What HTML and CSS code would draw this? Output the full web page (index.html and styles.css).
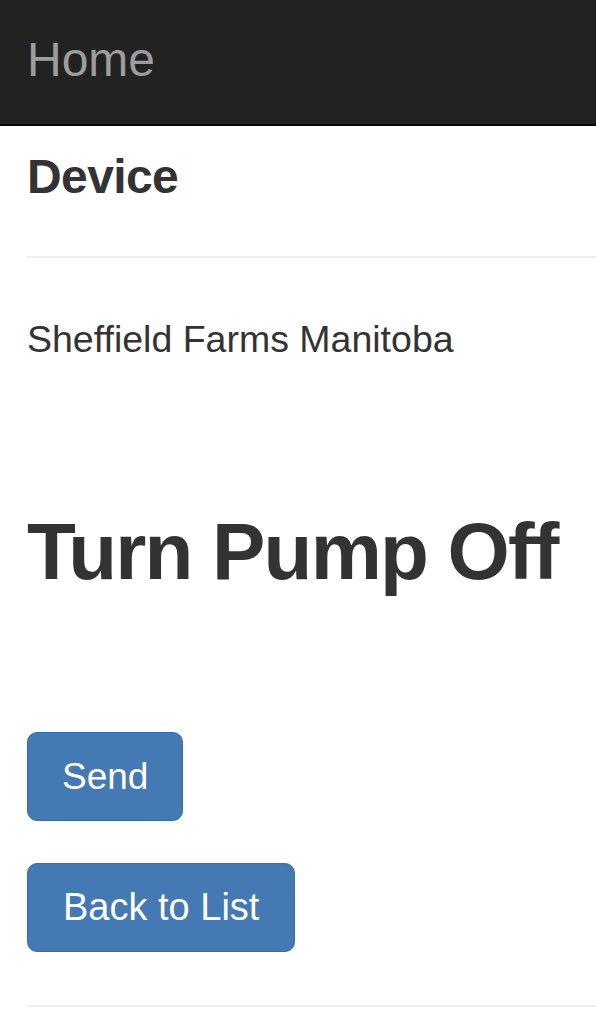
FILE: index.html
```html
<!DOCTYPE html>
<html lang="en">
<head>
  <meta charset="UTF-8">
  <title>Device</title>
  <link rel="stylesheet" href="styles.css">
</head>
<body>
  <nav class="navbar">
    <a class="navbar-brand" href="#">Home</a>
  </nav>

  <div class="container">
    <h4 class="title">Device</h4>
    <hr class="rule">

    <p class="device-name">Sheffield Farms Manitoba</p>

    <h1 class="command">Turn Pump Off</h1>

    <form class="actions">
      <button type="button" class="btn btn-primary send">Send</button>
      <a href="#" class="btn btn-primary back">Back to List</a>
    </form>

    <hr class="rule rule-bottom">
  </div>
</body>
</html>
```

FILE: styles.css
```css
body {
  margin: 0;
  font-family: "Liberation Sans", Arial, Helvetica, sans-serif;
  color: #333;
  background: #fff;
}
.navbar {
  height: 88px;
  padding-top: 36px;
  background: #222;
  border-bottom: 2px solid #080808;
}
.navbar-brand {
  display: block;
  padding-left: 27px;
  font-size: 48px;
  line-height: 48px;
  color: #9d9d9d;
  text-decoration: none;
}
.container {
  padding-left: 27px;
}
.title {
  margin: 27px 0 0;
  font-size: 48px;
  line-height: 48px;
  font-weight: bold;
  letter-spacing: -0.6px;
}
.rule {
  margin: 55px 0 0;
  border: 0;
  border-top: 2px solid #eee;
}
.device-name {
  margin: 63px 0 0;
  font-size: 37.5px;
  line-height: 37px;
}
.command {
  margin: 154px 0 0;
  font-size: 80px;
  line-height: 80px;
  font-weight: bold;
  letter-spacing: -1.8px;
}
.actions {
  display: flex;
  flex-direction: column;
  align-items: flex-start;
  gap: 42px;
  margin-top: 140px;
}
.btn {
  display: inline-block;
  box-sizing: border-box;
  height: 89px;
  padding: 0 34px;
  font-family: inherit;
  font-size: 37px;
  line-height: 87px;
  color: #fff;
  text-decoration: none;
  background: #4479b4;
  border: 1px solid #3a6ca4;
  border-radius: 10px;
}
.back {
  padding: 0 35px;
  font-size: 38px;
}
.rule-bottom {
  margin-top: 53px;
}
```
